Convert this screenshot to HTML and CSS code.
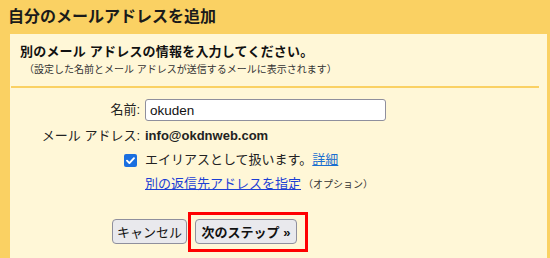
FILE: index.html
```html
<!DOCTYPE html>
<html lang="ja">
<head>
<meta charset="utf-8">
<link rel="stylesheet" href="styles.css">
</head>
<body>
<div class="page">
  <h1 class="title">自分のメールアドレスを追加</h1>
  <div class="panel">
    <div class="intro">
      <div class="heading">別のメール アドレスの情報を入力してください。</div>
      <div class="note">（設定した名前とメール アドレスが送信するメールに表示されます）</div>
    </div>
    <div class="divider"></div>
    <div class="form">
      <label class="label" for="name">名前:</label>
      <div class="value"><input id="name" class="text-input" type="text" value="okuden"></div>

      <div class="label">メール アドレス:</div>
      <div class="value email">info@okdnweb.com</div>

      <div class="label"><span class="checkbox"><svg viewBox="0 0 13 13" width="13" height="13"><path d="M3 6.7 L5.4 9.1 L10 4.2" fill="none" stroke="#fff" stroke-width="1.9" stroke-linecap="round" stroke-linejoin="round"/></svg></span></div>
      <div class="value">エイリアスとして扱います。<a class="link-detail" href="#">詳細</a></div>

      <div class="label"></div>
      <div class="value"><a class="link" href="#">別の返信先アドレスを指定</a><span class="optional">（オプション）</span></div>
    </div>
    <div class="actions">
      <button class="btn" type="button">キャンセル</button>
      <div class="next-wrap">
        <button class="btn btn-next" type="button">次のステップ »</button>
        <span class="highlight"></span>
      </div>
    </div>
  </div>
</div>
</body>
</html>
```
FILE: styles.css
```css
* { box-sizing: border-box; }
html, body { margin: 0; padding: 0; }
body {
  width: 550px;
  height: 258px;
  overflow: hidden;
  background: #fad163;
  font-family: "Liberation Sans", "Noto Sans CJK JP", sans-serif;
  color: #222;
}
.page {
  display: flex;
  flex-direction: column;
  height: 258px;
}
.title {
  margin: 0;
  height: 34px;
  padding: 6px 0 0 8px;
  font-size: 16px;
  line-height: 22px;
  font-weight: bold;
  color: #1a1a1a;
}
.panel {
  flex: 1;
  margin: 0 3px 0 10px;
  background: #fff7d7;
  display: flex;
  flex-direction: column;
}
.intro {
  padding: 9px 0 0 10px;
}
.heading {
  font-size: 13px;
  line-height: 18px;
  font-weight: bold;
  color: #111;
  letter-spacing: 0.2px;
}
.note {
  margin-top: 2px;
  padding-left: 4px;
  font-size: 10px;
  line-height: 14px;
  color: #333;
}
.divider {
  margin: 9px 8px 0 1px;
  height: 2px;
  background: #fad163;
}
.form {
  margin-top: 11px;
  display: grid;
  grid-template-columns: 130px 1fr;
  column-gap: 5px;
  row-gap: 6px;
  align-items: center;
  font-size: 13px;
  line-height: 18px;
}
.label {
  text-align: right;
  color: #222;
  display: flex;
  justify-content: flex-end;
  align-items: center;
}
.value { color: #222; }
.text-input {
  display: block;
  width: 241px;
  height: 22px;
  padding: 0 4px;
  border: 1px solid #8f8f9d;
  border-radius: 3px;
  background: #fff;
  font-family: "Liberation Sans", "Noto Sans CJK JP", sans-serif;
  font-size: 13.5px;
  color: #111;
}
.email {
  font-weight: bold;
  color: #222;
}
.checkbox {
  display: block;
  width: 13px;
  height: 13px;
  margin-right: 3px;
  border-radius: 2px;
  background: #1a6fe0;
}
.checkbox svg { display: block; }
.link-detail {
  color: #1a6fd0;
  text-decoration: underline;
}
.link {
  color: #1c3fd4;
  text-decoration: underline;
}
.optional {
  margin-left: 2px;
  font-size: 10px;
  color: #333;
}
.actions {
  margin-top: 25px;
  padding-left: 102px;
  display: flex;
  align-items: center;
  gap: 8px;
}
.btn {
  height: 25px;
  padding: 0 4px;
  border: 1px solid #8f8f9d;
  border-radius: 4px;
  background: #e9e9ed;
  font-family: "Liberation Sans", "Noto Sans CJK JP", sans-serif;
  font-size: 13px;
  color: #111;
}
.btn-next {
  width: 102px;
  font-weight: bold;
}
.next-wrap {
  position: relative;
  display: flex;
}
.highlight {
  position: absolute;
  left: -7px;
  top: -7px;
  width: 120px;
  height: 40px;
  border: 3px solid #f00;
  pointer-events: none;
}
```
